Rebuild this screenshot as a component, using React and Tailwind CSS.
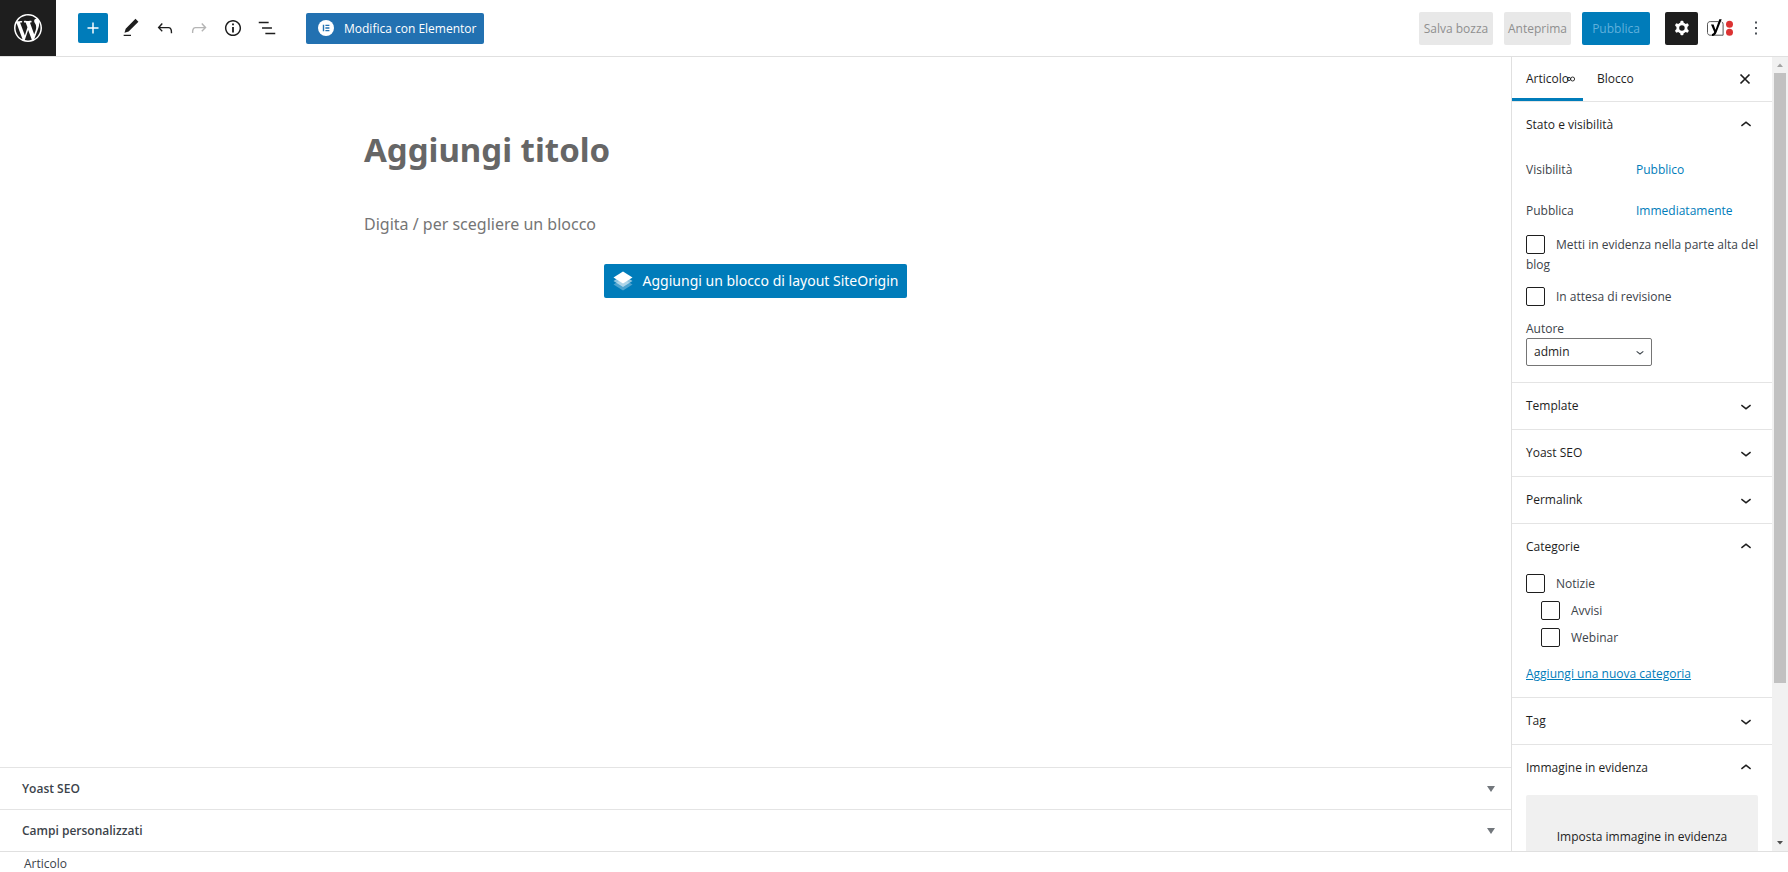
import React from "react";

const ICONS = {
  plus: "M18 11.2h-5.2V6h-1.6v5.2H6v1.6h5.2V18h1.6v-5.2H18z",
  edit: "M20.1 5.1L16.9 2 6.2 12.7l-1.3 4.4 4.5-1.3L20.1 5.1zM4 20.8h8v-1.5H4v1.5z",
  undo: "M18.3 11.7c-.6-.6-1.4-.9-2.3-.9H6.7l2.9-3.3-1.1-1-4.5 5L8.5 16l1-1-2.7-2.7H16c.5 0 .9.2 1.3.5 1 1 1 3.4 1 4.5v.3h1.5v-.2c0-1.5 0-4.3-1.5-5.7z",
  redo: "M15.6 6.5l-1.1 1 2.9 3.3H8c-.9 0-1.7.3-2.3.9-1.4 1.5-1.4 4.2-1.4 5.6v.2h1.5v-.3c0-1.1 0-3.5 1-4.5.3-.3.7-.5 1.3-.5h9.2L14.5 15l1.1 1.1 4.6-4.6-4.6-5z",
  info: "M12 3.2c-4.8 0-8.8 3.9-8.8 8.8 0 4.8 3.9 8.8 8.8 8.8 4.8 0 8.8-3.9 8.8-8.8 0-4.8-4-8.8-8.8-8.8zm0 16c-4 0-7.2-3.3-7.2-7.2C4.8 8 8 4.8 12 4.8s7.2 3.3 7.2 7.2c0 4-3.2 7.2-7.2 7.2zM11 17h2v-6h-2v6zm0-8h2V7h-2v2z",
  list: "M13.8 5.2H3v1.5h10.8V5.2zm-3.6 12v1.5H21v-1.5H10.2zm7.2-6H6.6v1.5h10.8v-1.5z",
  down: "M17.5 11.6L12 16l-5.5-4.4.9-1.2L12 14l4.5-3.6 1 1.2z",
  up: "M6.5 12.4L12 8l5.5 4.4-.9 1.2L12 10l-4.5 3.6-1-1.2z",
  more: "M13 19h-2v-2h2v2zm0-6h-2v-2h2v2zm0-6h-2V5h2v2z",
  cog: "M10.289 4.836A1 1 0 0111.275 4h1.306a1 1 0 01.987.836l.244 1.466c.787.26 1.503.679 2.108 1.218l1.393-.522a1 1 0 011.216.437l.653 1.13a1 1 0 01-.23 1.273l-1.148.944a6.025 6.025 0 010 2.435l1.149.946a1 1 0 01.23 1.272l-.653 1.13a1 1 0 01-1.216.437l-1.394-.522c-.605.54-1.32.958-2.108 1.218l-.244 1.466a1 1 0 01-.987.836h-1.306a1 1 0 01-.986-.836l-.244-1.466a5.995 5.995 0 01-2.108-1.218l-1.394.522a1 1 0 01-1.217-.436l-.653-1.131a1 1 0 01.23-1.272l1.149-.946a6.026 6.026 0 010-2.435l-1.148-.944a1 1 0 01-.23-1.272l.653-1.131a1 1 0 011.217-.437l1.393.522a5.994 5.994 0 012.108-1.218l.244-1.466zM14.929 12a3 3 0 11-6 0 3 3 0 016 0z",
  wordpress: "M20 10c0-5.51-4.49-10-10-10C4.48 0 0 4.49 0 10c0 5.52 4.48 10 10 10 5.51 0 10-4.48 10-10zM7.78 15.37L4.37 6.22c.55-.02 1.17-.08 1.17-.08.5-.06.44-1.13-.06-1.11 0 0-1.45.11-2.37.11-.18 0-.37 0-.58-.01C4.12 2.69 6.87 1.11 10 1.11c2.33 0 4.45.87 6.05 2.34-.68-.11-1.65.39-1.65 1.58 0 .74.45 1.36.9 2.1.35.61.55 1.36.55 2.46 0 1.49-1.4 5-1.4 5l-3.03-8.37c.54-.02.82-.17.82-.17.5-.05.44-1.25-.06-1.22 0 0-1.44.12-2.38.12-.87 0-2.33-.12-2.33-.12-.5-.03-.56 1.2-.06 1.22l.92.08 1.26 3.41zM17.41 10c.24-.64.74-1.87.43-4.25.7 1.29 1.05 2.71 1.05 4.25 0 3.29-1.73 6.24-4.4 7.78.97-2.59 1.94-5.2 2.92-7.78zM6.1 18.09C3.12 16.65 1.11 13.53 1.11 10c0-1.3.23-2.48.72-3.59C3.25 10.3 4.67 14.2 6.1 18.09zm4.03-6.63l2.58 6.98c-.86.29-1.76.45-2.71.45-.79 0-1.57-.11-2.29-.33.81-2.38 1.62-4.74 2.42-7.1z",
};

function Icon({ name, className = "size-[22px]", viewBox = "0 0 24 24" }) {
  return (
    <svg viewBox={viewBox} className={className} fill="currentColor" fillRule="evenodd" aria-hidden="true">
      <path d={ICONS[name]} />
    </svg>
  );
}

function ToolButton({ label, icon }) {
  return (
    <button type="button" aria-label={label} className="flex size-[30px] items-center justify-center text-[#1e1e1e]">
      <Icon name={icon} />
    </button>
  );
}

function YoastIcon() {
  return (
    <svg viewBox="0 0 28 20" className="h-5 w-7" aria-hidden="true">
      <path d="M12.5 3.6H4.2C2.6 3.6 1.5 4.7 1.5 6.2v8.200c0 1.700 1 2.800 2.700 2.800h12.900V6.200c0-1.200-.5-2-1.400-2.400" fill="#fff" stroke="#555" strokeWidth="1" />
      <path d="M5 6.400h2.600l1.900 5.300 3.800-10.500h2.400l-5.200 13.400c-.9 2.300-2.200 3.400-4.500 3.500v-2.100c1.200-.1 1.800-.7 2.200-1.900z" fill="#000" />
      <circle cx="23.500" cy="6.200" r="3.500" fill="#dc3232" />
      <circle cx="23.500" cy="14.200" r="3.500" fill="#dc3232" />
    </svg>
  );
}

function Check({ label, className = "" }) {
  return (
    <label className={`block ${className}`}>
      <input type="checkbox" className="mr-[11px] mb-[2px] inline-block size-[19px] appearance-none rounded-xs border border-[#1e1e1e] bg-white align-middle" />
      {label}
    </label>
  );
}

function Panel({ title, open = false, children }) {
  return (
    <section className="border-b border-[#e4e4e4]">
      <h2>
        <button type="button" aria-expanded={open} className="flex h-[46px] w-full items-center justify-between pr-[15px] pl-[14px] text-left font-medium text-[#1e1e1e]">
          {title}
          <Icon name={open ? "up" : "down"} />
        </button>
      </h2>
      {children}
    </section>
  );
}

function MetaBox({ title }) {
  return (
    <button type="button" className="flex h-[42px] w-full items-center justify-between border-t border-[#e4e4e4] pr-4 pl-[22px] font-semibold text-[#3c434a]">
      {title}
      <svg viewBox="0 0 8 6" className="h-[6px] w-2" aria-hidden="true">
        <path d="M0 0h8L4 6z" fill="#72777c" />
      </svg>
    </button>
  );
}

function Header() {
  return (
    <header className="flex h-[57px] shrink-0 items-center border-b border-[#e0e0e0]">
      <a href="#dashboard" aria-label="Bacheca" className="flex w-14 items-center justify-center self-stretch bg-[#1e1e1e] text-white">
        <Icon name="wordpress" viewBox="0 0 20 20" className="size-7" />
      </a>
      <div className="ml-[22px] flex items-center gap-1">
        <button type="button" aria-label="Aggiungi blocco" className="mr-1 flex size-[30px] items-center justify-center rounded-xs bg-[#007cba] text-white">
          <Icon name="plus" />
        </button>
        <ToolButton label="Strumenti" icon="edit" />
        <ToolButton label="Annulla" icon="undo" />
        <button type="button" disabled aria-label="Ripeti" className="flex size-[30px] items-center justify-center text-[#b5b5b5]">
          <Icon name="redo" />
        </button>
        <ToolButton label="Dettagli" icon="info" />
        <ToolButton label="Vista elenco" icon="list" />
      </div>
      <button type="button" className="ml-6 flex h-[31px] items-center gap-[10px] rounded-xs bg-[#2271b1] pr-2 pl-3 text-white">
        <svg viewBox="0 0 16 16" className="size-4" aria-hidden="true">
          <circle cx="8" cy="8" r="8" fill="#fff" />
          <path d="M4.800 4.700h1.400v6.600H4.800zM7.400 4.700h4v1.300h-4zM7.400 7.350h4v1.300h-4zM7.400 10h4v1.300h-4z" fill="#2271b1" />
        </svg>
        <span className="pt-[2px]">Modifica con Elementor</span>
      </button>
      <div className="mr-[21px] ml-auto flex items-center gap-2">
        <div className="flex items-center gap-[11px]">
          <button type="button" disabled className="h-[33px] w-[74px] rounded-xs bg-[#e8e8e8] pt-[2px] text-[#8f8f8f]">Salva bozza</button>
          <button type="button" disabled className="h-[33px] w-[67px] rounded-xs bg-[#e8e8e8] pt-[2px] text-[#8f8f8f]">Anteprima</button>
          <button type="button" disabled className="h-[33px] w-[68px] rounded-xs bg-[#007cba] pt-[2px] text-[#5fb0dc]">Pubblica</button>
          <button type="button" aria-label="Impostazioni" className="ml-1 flex size-[33px] items-center justify-center rounded-xs bg-[#1e1e1e] text-white">
            <Icon name="cog" />
          </button>
        </div>
        <div className="flex items-center gap-[11px]">
          <button type="button" aria-label="Yoast SEO"><YoastIcon /></button>
          <button type="button" aria-label="Opzioni"><Icon name="more" /></button>
        </div>
      </div>
    </header>
  );
}

function Sidebar() {
  return (
    <aside className="flex w-[277px] shrink-0 border-l border-[#e0e0e0]">
      <div className="min-w-0 flex-1 overflow-hidden">
        <div className="flex h-[45px] items-stretch border-b border-[#e4e4e4] text-[#1e1e1e]">
          <button type="button" className="flex w-[71px] items-center border-b-3 border-[#007cba] pt-[3px] pl-[14px]">
            Articolo
            <svg viewBox="0 0 8 6" className="-ml-[2px] h-[6px] w-2 shrink-0" fill="none" stroke="#1e1e1e" strokeWidth="0.9" aria-hidden="true">
              <circle cx="2" cy="3" r="1.600" />
              <circle cx="5.600" cy="3" r="2" />
            </svg>
          </button>
          <button type="button" className="px-[14px]">Blocco</button>
          <button type="button" aria-label="Chiudi" className="mr-5 ml-auto">
            <svg viewBox="0 0 14 14" className="size-[14px]" fill="none" stroke="#1e1e1e" strokeWidth="1.700" aria-hidden="true">
              <path d="M2.500 2.500l9 9M11.500 2.500l-9 9" />
            </svg>
          </button>
        </div>
        <Panel title="Stato e visibilità" open>
          <div className="px-[14px] pt-px pb-4">
            <div className="flex h-[41px] items-center">
              <span className="w-[110px]">Visibilità</span>
              <button type="button" className="text-[#007cba]">Pubblico</button>
            </div>
            <div className="flex h-[41px] items-center">
              <span className="w-[110px]">Pubblica</span>
              <button type="button" className="text-[#007cba]">Immediatamente</button>
            </div>
            <Check label="Metti in evidenza nella parte alta del blog" className="mt-1 -mr-2 mb-[13px]" />
            <Check label="In attesa di revisione" className="mb-3" />
            <label htmlFor="author" className="block">Autore</label>
            <div className="grid w-[126px] items-center">
              <select id="author" className="col-start-1 row-start-1 h-7 appearance-none rounded-xs border border-[#757575] bg-white px-[7px] text-[#1e1e1e]">
                <option>admin</option>
              </select>
              <Icon name="down" className="pointer-events-none col-start-1 row-start-1 mr-1 size-4 justify-self-end" />
            </div>
          </div>
        </Panel>
        <Panel title="Template" />
        <Panel title="Yoast SEO" />
        <Panel title="Permalink" />
        <Panel title="Categorie" open>
          <div className="flex flex-col gap-[6px] px-[14px] pt-1 pb-[14px]">
            <Check label="Notizie" />
            <Check label="Avvisi" className="ml-[15px]" />
            <Check label="Webinar" className="ml-[15px]" />
            <a href="#nuova-categoria" className="mt-[10px] text-[#007cba] underline">Aggiungi una nuova categoria</a>
          </div>
        </Panel>
        <Panel title="Tag" />
        <Panel title="Immagine in evidenza" open>
          <div className="px-[14px] pt-1 pb-4">
            <button type="button" className="h-[84px] w-full rounded-xs bg-[#f0f0f0] text-[#1e1e1e]">Imposta immagine in evidenza</button>
          </div>
        </Panel>
      </div>
      <div className="flex w-4 flex-col items-center bg-[#f1f1f1]" aria-hidden="true">
        <svg viewBox="0 0 16 16" className="size-4"><path d="M5 10h6L8 6.500z" fill="#a3a3a3" /></svg>
        <div className="flex w-3 flex-1 flex-col">
          <div className="basis-4/5 bg-[#c1c1c1]" />
        </div>
        <svg viewBox="0 0 16 16" className="size-4"><path d="M5 6h6L8 9.500z" fill="#505050" /></svg>
      </div>
    </aside>
  );
}

export default function App() {
  return (
    <div className="flex h-screen flex-col bg-white font-['Open_Sans',sans-serif] text-[12px] leading-[18px] text-[#3c434a]">
      <Header />
      <div className="flex min-h-0 flex-1">
        <main className="flex min-w-0 flex-1 flex-col">
          <div className="mx-auto flex w-full max-w-[783px] flex-1 flex-col pt-[69px] font-['Noto_Sans',sans-serif]">
            <h1 className="text-[33px] leading-[48px] font-bold text-[#666]">Aggiungi titolo</h1>
            <p className="mt-9 text-[16px] leading-7 text-[#757575]">Digita / per scegliere un blocco</p>
            <button type="button" className="mt-[26px] flex h-[34px] items-center gap-[10px] self-center rounded-xs bg-[#007cba] px-[9px] text-[14px] text-white">
              <svg viewBox="0 0 20 20" className="size-5" fill="#fff" aria-hidden="true">
                <path d="M10 7.500l9.500 6-9.500 6-9.500-6z" opacity=".3" />
                <path d="M10 4l9.500 6-9.500 6-9.500-6z" opacity=".55" />
                <path d="M10 .5l9.500 6-9.500 6-9.500-6z" />
              </svg>
              Aggiungi un blocco di layout SiteOrigin
            </button>
          </div>
          <MetaBox title="Yoast SEO" />
          <MetaBox title="Campi personalizzati" />
        </main>
        <Sidebar />
      </div>
      <footer className="h-[21px] shrink-0 border-t border-[#e0e0e0] px-6 leading-6">Articolo</footer>
    </div>
  );
}
